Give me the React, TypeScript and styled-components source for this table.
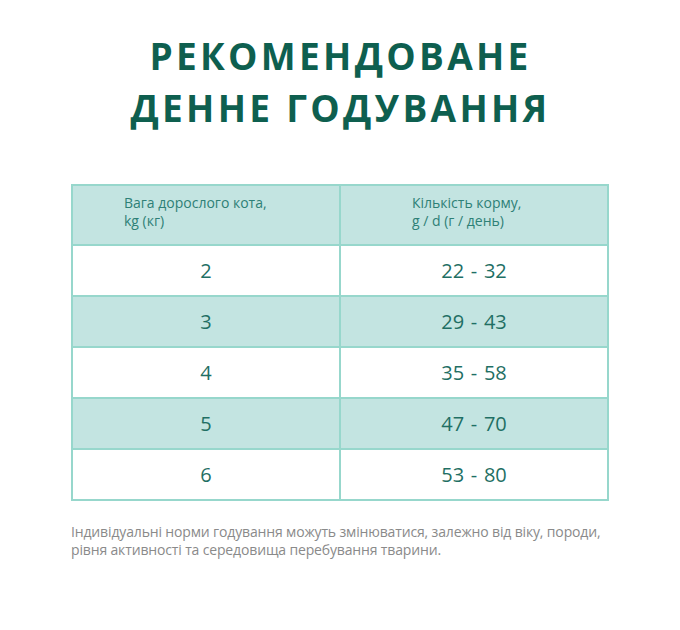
import React from "react";
import styled, { createGlobalStyle } from "styled-components";

const Global = createGlobalStyle`
  html, body { margin: 0; padding: 0; background: #fff; }
  body { font-family: "Open Sans", "Noto Sans", sans-serif; }
`;

const Page = styled.div`
  width: 680px;
  height: 630px;
  box-sizing: border-box;
  padding: 30px 70px 0 71px;
  display: flex;
  flex-direction: column;
  align-items: stretch;
`;

const Title = styled.h1`
  margin: 0;
  text-align: center;
  font-family: "Open Sans", "Noto Sans", sans-serif;
  font-weight: 700;
  font-size: 37px;
  line-height: 52px;
  letter-spacing: 3.3px;
  color: #0e5f4f;
`;

const Table = styled.table`
  margin-top: 50px;
  width: 538px;
  border-collapse: collapse;
  border: 2px solid #97d7cc;
  table-layout: fixed;
`;

const HeadCell = styled.th`
  background: #c3e4e1;
  height: 60px;
  box-sizing: border-box;
  padding: 0 0 6px 0;
  font-weight: 500;
  font-size: 14px;
  line-height: 18px;
  color: #2e8076;
  border-right: 2px solid #97d7cc;
  vertical-align: middle;
  &:last-child { border-right: none; }
`;

const HeadInner = styled.div<{ $left: number }>`
  text-align: left;
  padding-left: ${(p) => p.$left}px;
  letter-spacing: 0;
`;

const Row = styled.tr<{ $shade: boolean }>`
  background: ${(p) => (p.$shade ? "#c3e4e1" : "#ffffff")};
`;

const Cell = styled.td`
  height: 49px;
  padding: 0;
  text-align: center;
  font-size: 20px;
  line-height: 24px;
  word-spacing: 1.5px;
  color: #1f6f64;
  border-right: 2px solid #97d7cc;
  border-top: 2px solid #97d7cc;
  &:last-child { border-right: none; }
`;

const Note = styled.p`
  margin: 22px 0 0 0;
  font-size: 14px;
  line-height: 18px;
  color: #8a8a8a;
  letter-spacing: -0.15px;
  white-space: nowrap;
`;

const rows = [
  ["2", "22 - 32"],
  ["3", "29 - 43"],
  ["4", "35 - 58"],
  ["5", "47 - 70"],
  ["6", "53 - 80"],
];

export default function App() {
  return (
    <>
      <Global />
      <Page>
        <Title>
          РЕКОМЕНДОВАНЕ
          <br />
          ДЕННЕ ГОДУВАННЯ
        </Title>
        <Table>
          <colgroup>
            <col style={{ width: 268 }} />
            <col />
          </colgroup>
          <thead>
            <tr>
              <HeadCell>
                <HeadInner $left={51}>
                  Вага дорослого кота,
                  <br />
                  kg (кг)
                </HeadInner>
              </HeadCell>
              <HeadCell>
                <HeadInner $left={71}>
                  Кількість корму,
                  <br />
                  g / d (г / день)
                </HeadInner>
              </HeadCell>
            </tr>
          </thead>
          <tbody>
            {rows.map((r, i) => (
              <Row key={r[0]} $shade={i % 2 === 1}>
                <Cell>{r[0]}</Cell>
                <Cell>{r[1]}</Cell>
              </Row>
            ))}
          </tbody>
        </Table>
        <Note>
          Індивідуальні норми годування можуть змінюватися, залежно від віку, породи,
          <br />
          рівня активності та середовища перебування тварини.
        </Note>
      </Page>
    </>
  );
}
